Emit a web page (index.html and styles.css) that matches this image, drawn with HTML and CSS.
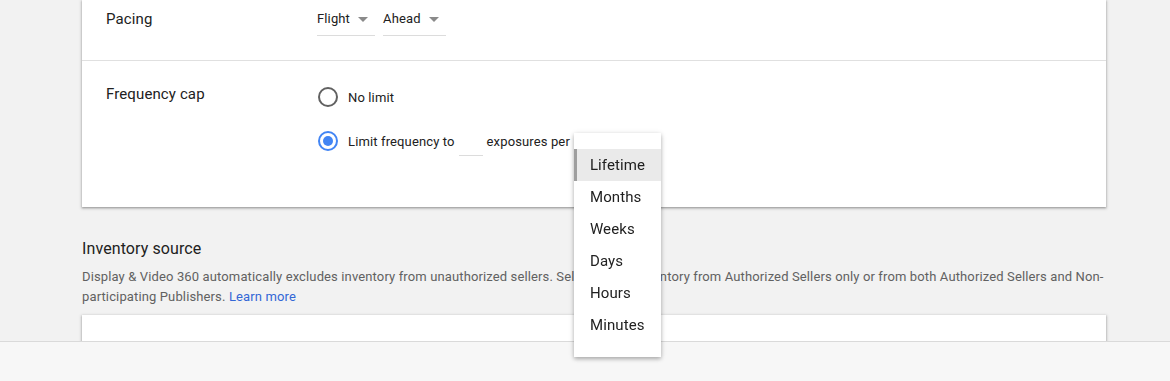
FILE: index.html
```html
<!DOCTYPE html>
<html lang="en">
<head>
    <meta charset="UTF-8">
    <meta name="viewport" content="width=device-width, initial-scale=1.0">
    <title>Insertion order settings</title>
    <link rel="stylesheet" href="styles.css">
</head>
<body>
    <div class="page">
        <div class="card">
            <div class="row row-pacing">
                <div class="row-label">Pacing</div>
                <div class="row-value selects">
                    <div class="select">
                        <span>Flight</span>
                        <span class="arrow"></span>
                    </div>
                    <div class="select">
                        <span>Ahead</span>
                        <span class="arrow"></span>
                    </div>
                </div>
            </div>
            <div class="row row-freq">
                <div class="row-label">Frequency cap</div>
                <div class="row-value options">
                    <div class="option">
                        <span class="radio"></span>
                        <span>No limit</span>
                    </div>
                    <div class="option option-limit">
                        <span class="radio checked"></span>
                        <span>Limit frequency to</span>
                        <span class="num-input"></span>
                        <span>exposures per</span>
                        <div class="unit-select">
                            <ul class="menu">
                                <li class="active">Lifetime</li>
                                <li>Months</li>
                                <li>Weeks</li>
                                <li>Days</li>
                                <li>Hours</li>
                                <li>Minutes</li>
                            </ul>
                        </div>
                    </div>
                </div>
            </div>
        </div>

        <h2 class="section-title">Inventory source</h2>
        <p class="section-desc">Display &amp; Video 360 automatically excludes inventory from unauthorized sellers. Select to use inventory from Authorized Sellers only or from both Authorized Sellers and Non-participating Publishers. <a href="#" class="link">Learn more</a></p>

        <div class="card card-inventory"></div>
    </div>

    <div class="footer-bar"></div>
</body>
</html>
```

FILE: styles.css
```css
* {
    margin: 0;
    padding: 0;
    box-sizing: border-box;
}
html, body {
    height: 100%;
    overflow: hidden;
}
body {
    background: #f2f2f2;
    font-family: Roboto, 'Liberation Sans', Arial, sans-serif;
    color: #212121;
}
.page {
    padding: 0 64px 0 82px;
}
.card {
    background: #fff;
    box-shadow: 0 1px 2px rgba(0, 0, 0, 0.3), 0 1px 3px 1px rgba(0, 0, 0, 0.12);
}
.row {
    display: flex;
    padding: 0 24px;
}
.row-label {
    width: 211px;
    font-size: 15px;
    line-height: 18px;
    letter-spacing: 0.12px;
}
.row-pacing {
    height: 61px;
    padding-top: 10px;
    border-bottom: 1px solid #e0e0e0;
}
.selects {
    display: flex;
    gap: 8px;
    align-items: flex-start;
}
.select {
    display: flex;
    align-items: center;
    font-size: 13px;
    line-height: 18px;
    letter-spacing: 0.13px;
    padding-right: 7px;
    padding-bottom: 7px;
    border-bottom: 1px solid #dcdcdc;
}
.arrow {
    width: 0;
    height: 0;
    margin-left: 8px;
    border-left: 5px solid transparent;
    border-right: 5px solid transparent;
    border-top: 5px solid #8a8a8a;
}
.row-freq {
    height: 146px;
    padding-top: 24px;
}
.options {
    display: flex;
    flex-direction: column;
    gap: 17px;
}
.option {
    display: flex;
    align-items: center;
    height: 24px;
    font-size: 13px;
    letter-spacing: 0.13px;
}
.option-limit {
    height: 30px;
}
.radio {
    width: 20px;
    height: 20px;
    margin: 0 10px 0 1px;
    border: 2px solid #616161;
    border-radius: 50%;
    display: flex;
    align-items: center;
    justify-content: center;
}
.radio.checked {
    border-color: #4285f4;
}
.radio.checked::after {
    content: '';
    width: 10px;
    height: 10px;
    border-radius: 50%;
    background: #4285f4;
}
.num-input {
    width: 24px;
    height: 30px;
    margin: 0 4px;
    border-bottom: 1px solid #dcdcdc;
}
.unit-select {
    position: relative;
    width: 87px;
    height: 30px;
    margin-left: 4px;
}
.menu {
    position: absolute;
    top: 7px;
    left: 0;
    width: 87px;
    padding: 16px 0;
    list-style: none;
    background: #fff;
    box-shadow: 0 2px 4px rgba(0, 0, 0, 0.25), 0 1px 6px rgba(0, 0, 0, 0.12);
    z-index: 20;
}
.menu li {
    height: 32px;
    line-height: 32px;
    padding-left: 16px;
    font-size: 15px;
    letter-spacing: 0.1px;
    color: #212121;
}
.menu li.active {
    background: #eaeaea;
    border-left: 3px solid #9e9e9e;
    padding-left: 13px;
}
.section-title {
    margin-top: 32px;
    font-size: 16px;
    font-weight: normal;
    line-height: 20px;
    letter-spacing: 0.1px;
    color: #212121;
}
.section-desc {
    margin-top: 8px;
    font-size: 13px;
    line-height: 20px;
    letter-spacing: 0.13px;
    color: #616161;
}
.link {
    color: #3367d6;
    text-decoration: none;
}
.card-inventory {
    margin-top: 8px;
    height: 120px;
}
.footer-bar {
    position: fixed;
    left: 0;
    right: 0;
    bottom: 0;
    height: 40px;
    background: #f7f7f7;
    border-top: 1px solid #dadada;
    z-index: 10;
}
```
